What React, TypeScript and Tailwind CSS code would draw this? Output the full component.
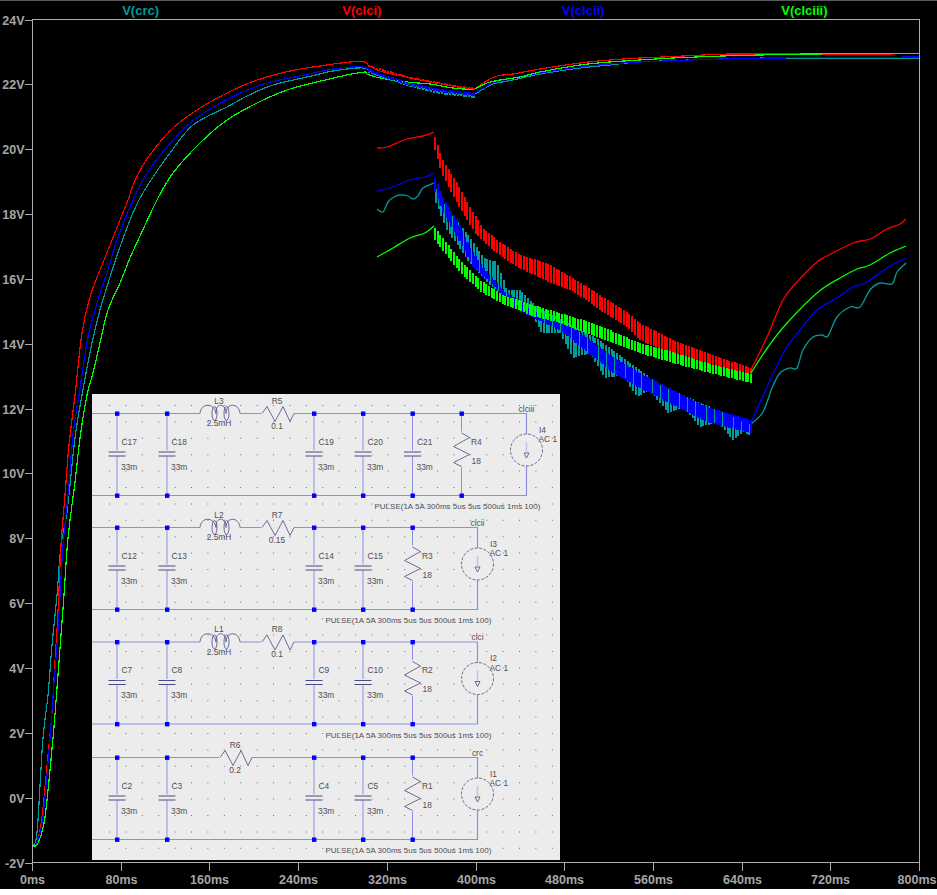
type Pt = [number, number];

const CYAN = "#009b9b";
const RED = "#ff0000";
const BLUE = "#0000ff";
const GREEN = "#00ff00";
const AXIS = "#adadad";

// all traces are in screen pixels, read off the plot
const mainTraces: { color: string; pts: Pt[] }[] = [
  {
    color: CYAN,
    pts: [[33, 846], [36, 840], [38, 820], [43, 738], [48, 695], [52, 645], [57, 595], [61, 545], [67, 512], [75, 438], [82, 395], [92, 343], [100, 310], [110, 277], [120, 247], [130, 220], [139, 200], [153, 177], [170, 153], [193, 125], [227, 107], [247, 96], [273, 85], [307, 77], [333, 71], [363, 68], [377, 75], [407, 84], [440, 91], [470, 95], [480, 91], [493, 84], [513, 80], [540, 74], [580, 68], [610, 65], [640, 62], [720, 59], [773, 58], [919, 58]],
  },
  {
    color: RED,
    pts: [[33, 846], [37, 842], [42, 817], [49, 745], [52, 712], [55, 662], [58, 612], [61, 545], [65, 495], [69, 445], [75, 395], [82, 333], [90, 297], [100, 270], [112, 240], [128, 200], [133, 185], [143, 165], [155, 148], [173, 128], [200, 108], [233, 90], [257, 80], [290, 71], [320, 66], [350, 62], [365, 62], [368, 65], [377, 70], [387, 73], [407, 77], [430, 82], [453, 86], [473, 89], [483, 83], [497, 76], [513, 74], [540, 69], [580, 63], [610, 60], [640, 58], [663, 57], [693, 55.5], [730, 54], [807, 54], [893, 54]],
  },
  {
    color: BLUE,
    pts: [[33, 846], [37, 842], [43, 817], [50, 738], [53, 695], [57, 645], [60, 595], [63, 545], [68, 495], [73, 435], [79, 395], [88, 337], [98, 300], [108, 270], [117, 240], [133, 200], [147, 173], [167, 147], [190, 123], [217, 105], [243, 92], [267, 83], [300, 76], [333, 69], [363, 67], [377, 74], [407, 83], [440, 90], [470, 94], [480, 90], [493, 83], [513, 78], [540, 73], [580, 67], [610, 64], [640, 62], [720, 59], [773, 58], [919, 57]],
  },
  {
    color: GREEN,
    pts: [[33, 846], [38, 843], [45, 817], [53, 738], [57, 688], [61, 635], [64, 595], [68, 538], [75, 482], [80, 438], [87, 395], [93, 373], [100, 343], [108, 310], [120, 283], [130, 258], [140, 236], [157, 200], [173, 173], [200, 143], [227, 120], [257, 103], [287, 90], [317, 82], [347, 75], [365, 72], [367, 74], [380, 78], [407, 82], [430, 84], [453, 88], [473, 89], [487, 83], [500, 80], [520, 77], [540, 72], [580, 65], [610, 62], [640, 60], [673, 58], [723, 56], [760, 55], [807, 54], [897, 53.5], [919, 53.5]],
  },
];

const pulseTraces: { color: string; before: Pt[]; after: Pt[]; upper: Pt[]; lower: Pt[]; phase: number; bar: number }[] = [
  {
    color: CYAN,
    before: [[377, 209], [383, 212], [388, 202], [394, 197], [400, 195], [408, 196], [413, 199], [418, 196], [423, 188], [434, 183]],
    after: [[751, 424], [763, 412], [772, 388], [780, 373], [790, 368], [797, 368], [803, 350], [813, 337], [822, 335], [828, 336], [837, 317], [850, 307], [860, 307], [870, 290], [880, 283], [892, 284], [897, 272], [906, 263]],
    upper: [[435, 187], [447, 210], [467, 233], [483, 257], [497, 262], [507, 290], [520, 290], [537, 307], [600, 340], [660, 385], [751, 425]],
    lower: [[435, 200], [447, 230], [470, 263], [490, 285], [533, 317], [542, 333], [560, 333], [573, 358], [590, 353], [605, 378], [623, 375], [637, 397], [650, 390], [668, 413], [683, 407], [700, 427], [718, 422], [733, 440], [743, 432], [751, 436]],
    phase: 1,
    bar: 2,
  },
  {
    color: RED,
    before: [[377, 148], [387, 147], [407, 139], [423, 136], [434, 132]],
    after: [[751, 370], [767, 337], [783, 300], [797, 282], [817, 262], [827, 256], [853, 243], [870, 239], [887, 229], [900, 224], [906, 219]],
    upper: [[435, 137], [443, 160], [457, 183], [470, 207], [483, 228], [500, 242], [520, 255], [547, 263], [573, 278], [600, 295], [627, 312], [640, 323], [673, 340], [707, 353], [751, 368]],
    lower: [[435, 150], [443, 176], [457, 203], [475, 233], [493, 250], [517, 267], [547, 281], [573, 291], [600, 310], [627, 327], [640, 340], [673, 355], [707, 365], [751, 378]],
    phase: 0,
    bar: 2,
  },
  {
    color: BLUE,
    before: [[377, 191], [390, 188], [410, 180], [425, 177], [434, 173]],
    after: [[751, 423], [767, 387], [785, 350], [800, 330], [817, 310], [837, 298], [853, 287], [867, 282], [887, 268], [906, 258]],
    upper: [[435, 178], [443, 197], [457, 220], [470, 248], [483, 267], [503, 290], [533, 310], [560, 320], [587, 337], [613, 357], [640, 373], [673, 390], [707, 407], [751, 420]],
    lower: [[435, 192], [443, 213], [457, 237], [473, 267], [493, 285], [513, 307], [537, 320], [560, 330], [587, 352], [613, 373], [640, 388], [673, 405], [707, 422], [751, 433]],
    phase: 0,
    bar: 2.4,
  },
  {
    color: GREEN,
    before: [[377, 257], [393, 248], [410, 238], [425, 233], [434, 226]],
    after: [[751, 373], [768, 347], [787, 323], [817, 293], [840, 278], [857, 269], [870, 265], [890, 253], [906, 246]],
    upper: [[435, 228], [447, 243], [460, 260], [480, 280], [503, 295], [533, 305], [560, 313], [593, 323], [640, 343], [673, 352], [707, 363], [751, 374]],
    lower: [[435, 240], [447, 256], [460, 272], [480, 291], [503, 304], [533, 316], [560, 323], [593, 335], [640, 353], [673, 363], [707, 372], [751, 383]],
    phase: 0,
    bar: 2,
  },
];

// ripple right after the first load step, where the main traces get noisy
const ripple: { color: string; from: Pt[]; to: Pt[] }[] = [
  { color: CYAN, from: [[368, 70], [407, 83], [440, 90], [476, 95]], to: [[368, 73], [407, 86], [440, 94], [476, 98]] },
  { color: RED, from: [[368, 65], [407, 76], [453, 85], [476, 88]], to: [[368, 67], [407, 78], [453, 87], [476, 90]] },
  { color: BLUE, from: [[368, 69], [407, 82], [440, 89], [476, 93]], to: [[368, 72], [407, 85], [440, 92], [476, 96]] },
];

function at(pts: Pt[], x: number) {
  if (x <= pts[0][0]) return pts[0][1];
  for (let i = 1; i < pts.length; i++) {
    if (x <= pts[i][0]) {
      const [x0, y0] = pts[i - 1];
      const [x1, y1] = pts[i];
      return y0 + ((y1 - y0) * (x - x0)) / (x1 - x0);
    }
  }
  return pts[pts.length - 1][1];
}

// catmull-rom through the read-off points so the curves don't look like polygons
function smooth(pts: Pt[]) {
  let d = `M${pts[0][0]} ${pts[0][1]}`;
  for (let i = 0; i < pts.length - 1; i++) {
    const p0 = pts[Math.max(i - 1, 0)];
    const p1 = pts[i];
    const p2 = pts[i + 1];
    const p3 = pts[Math.min(i + 2, pts.length - 1)];
    const c1x = p1[0] + (p2[0] - p0[0]) / 6;
    const c1y = p1[1] + (p2[1] - p0[1]) / 6;
    const c2x = p2[0] - (p3[0] - p1[0]) / 6;
    const c2y = p2[1] - (p3[1] - p1[1]) / 6;
    d += `C${c1x.toFixed(1)} ${c1y.toFixed(1)} ${c2x.toFixed(1)} ${c2y.toFixed(1)} ${p2[0]} ${p2[1]}`;
  }
  return d;
}

function bars(upper: Pt[], lower: Pt[], x0: number, x1: number, phase: number) {
  let d = "";
  for (let x = x0 + phase; x <= x1; x += 2.7) {
    d += `M${x.toFixed(1)} ${at(upper, x).toFixed(1)}V${at(lower, x).toFixed(1)}`;
  }
  return d;
}

const yLabels = ["24V", "22V", "20V", "18V", "16V", "14V", "12V", "10V", "8V", "6V", "4V", "2V", "0V", "-2V"];
const xLabels = ["0ms", "80ms", "160ms", "240ms", "320ms", "400ms", "480ms", "560ms", "640ms", "720ms", "800ms"];

function Plot() {
  return (
    <svg className="block overflow-visible" width={937} height={869} viewBox="0 20 937 869" fontFamily="'Liberation Sans', Arial, sans-serif">
      <rect x={32.5} y={19.5} width={887} height={843} fill="none" stroke={AXIS} />
      {yLabels.map((label, i) => {
        const y = Math.round(19.5 + i * 64.85) + 0.5;
        return (
          <g key={label}>
            <path d={`M25 ${y}H32`} stroke={AXIS} />
            <text x={24.5} y={y + 4.5} textAnchor="end" fontSize={12.5} fontWeight={700} fill="#a6a6a6">
              {label}
            </text>
          </g>
        );
      })}
      {xLabels.map((label, i) => {
        const x = Math.round(32 + i * 88.7) + 0.5;
        return (
          <g key={label}>
            <path d={`M${x} 863V871`} stroke={AXIS} />
            <text x={i === 10 ? 936.5 : x} y={883.5} textAnchor={i === 10 ? "end" : "middle"} fontSize={12.5} fontWeight={700} fill="#a6a6a6">
              {label}
            </text>
          </g>
        );
      })}

      {mainTraces.map((t) => (
        <path key={t.color} d={smooth(t.pts)} fill="none" stroke={t.color} strokeWidth={1.2} shapeRendering="crispEdges" />
      ))}
      {ripple.map((r) => (
        <path key={r.color} d={bars(r.from, r.to, 369, 476, 0)} fill="none" stroke={r.color} strokeWidth={2} shapeRendering="crispEdges" />
      ))}
      {pulseTraces.map((t) => (
        <g key={t.color} fill="none" stroke={t.color}>
          <path d={smooth(t.before)} strokeWidth={1.3} />
          <path d={bars(t.upper, t.lower, 435, 751, t.phase)} strokeWidth={t.bar} shapeRendering="crispEdges" />
          <path d={smooth(t.after)} strokeWidth={1.3} />
        </g>
      ))}
    </svg>
  );
}

const WIRE = "#8d8de4";
const INK = "#4a4a82";
const LABEL = "#4f4f57";

function Label({ x, y, children, anchor = "start", size = 8.4 }: { x: number; y: number; children: string; anchor?: "start" | "middle"; size?: number }) {
  return (
    <text x={x} y={y + 3.2} fontSize={size} fill={LABEL} textAnchor={anchor}>
      {children}
    </text>
  );
}

function Capacitor({ x, top, name }: { x: number; top: number; name: string }) {
  return (
    <g>
      <path d={`M${x} ${top}V${top + 82}`} stroke={WIRE} fill="none" />
      <rect x={x - 9} y={top + 37} width={18} height={6} fill="#ececec" />
      <path d={`M${x - 8.5} ${top + 38.5}H${x + 8.5}M${x - 8.5} ${top + 42.5}H${x + 8.5}`} stroke={INK} fill="none" />
      <Label x={x + 4.5} y={top + 28}>{name}</Label>
      <Label x={x + 4} y={top + 53}>33m</Label>
    </g>
  );
}

function Node({ x, y }: { x: number; y: number }) {
  return <rect x={x - 2} y={y - 2} width={4.4} height={4.4} fill="#0000ff" />;
}

function Inductor({ top, name }: { top: number; name: string }) {
  const y = top;
  return (
    <g fill="none">
      <rect x={200} y={y - 2} width={40} height={4} fill="#ececec" />
      <path d={`M200 ${y}C201 ${y - 11} 214 ${y - 11} 216 ${y}C215 ${y - 11} 226 ${y - 11} 226 ${y}C226 ${y - 11} 239 ${y - 11} 240 ${y}`} stroke={INK} strokeWidth={0.8} />
      <ellipse cx={214.5} cy={y} rx={2.5} ry={7} stroke={INK} strokeWidth={0.8} />
      <ellipse cx={226.5} cy={y} rx={2.5} ry={7} stroke={INK} strokeWidth={0.8} />
      <Label x={219} y={y - 13} anchor="middle">{name}</Label>
      <Label x={219} y={y + 9.5} anchor="middle">2.5mH</Label>
    </g>
  );
}

function Resistor({ x, top, name, value }: { x: number; top: number; name: string; value: string }) {
  return (
    <g fill="none">
      <rect x={x - 1} y={top - 2} width={33} height={4} fill="#ececec" />
      <path d={`M${x} ${top}l5 -7l8 15l8 -15l7 15l4 -8`} stroke={INK} strokeWidth={0.8} />
      <Label x={x + 15} y={top - 13} anchor="middle">{name}</Label>
      <Label x={x + 15} y={top + 12} anchor="middle">{value}</Label>
    </g>
  );
}

function Load({ x, top, name, value }: { x: number; top: number; name: string; value: string }) {
  return (
    <g fill="none">
      <path d={`M${x} ${top}V${top + 82}`} stroke={WIRE} />
      <rect x={x - 2} y={top + 18} width={4} height={36} fill="#ececec" />
      <path d={`M${x} ${top + 19.5}l8 4.5l-16 9l16 8l-16 8l8 4`} stroke={INK} strokeWidth={0.8} />
      <Label x={x + 9.5} y={top + 28}>{name}</Label>
      <Label x={x + 10} y={top + 47}>{value}</Label>
    </g>
  );
}

function Source({ x, top, name, net }: { x: number; top: number; name: string; net: string }) {
  const cy = top + 36.5;
  return (
    <g fill="none">
      <circle cx={x} cy={cy} r={16} fill="#ececec" stroke={INK} strokeWidth={0.8} strokeDasharray="3 1.5" />
      <path d={`M${x} ${cy - 8}V${cy + 2}`} stroke="#c4c4e6" strokeWidth={1.5} />
      <path d={`M${x - 2.5} ${cy + 3}h5l-2.5 5z`} stroke={INK} strokeWidth={0.8} />
      <Label x={x} y={top - 5} anchor="middle">{net}</Label>
      <Label x={x + 12.5} y={top + 16}>{name}</Label>
      <Label x={x + 12} y={top + 25.5}>AC 1</Label>
    </g>
  );
}

const rows = [
  { top: 413.5, caps: ["C17", "C18", "C19", "C20", "C21"], l: "L3", r: ["R5", "0.1"], load: "R4", src: "I4", net: "clciii" },
  { top: 527.5, caps: ["C12", "C13", "C14", "C15"], l: "L2", r: ["R7", "0.15"], load: "R3", src: "I3", net: "clcii" },
  { top: 642, caps: ["C7", "C8", "C9", "C10"], l: "L1", r: ["R8", "0.1"], load: "R2", src: "I2", net: "clci" },
  { top: 757.5, caps: ["C2", "C3", "C4", "C5"], l: "", r: ["R6", "0.2"], load: "R1", src: "I1", net: "crc" },
];

const capX = [117, 167, 314, 363, 412.5, 461.5];

function Row({ top, caps, l, r, load, src, net }: (typeof rows)[number]) {
  const loadX = capX[caps.length];
  const srcX = loadX + 65;
  const bottom = top + 82;
  return (
    <g>
      <path d={`M92 ${top}H${srcX}V${top + 82}H92`} stroke={WIRE} strokeWidth={1.2} fill="none" />
      {caps.map((name, i) => (
        <Capacitor key={name} x={capX[i]} top={top} name={name} />
      ))}
      {l ? <Inductor top={top} name={l} /> : null}
      <Resistor x={l ? 262 : 220} top={top} name={r[0]} value={r[1]} />
      <Load x={loadX} top={top} name={load} value="18" />
      <Source x={srcX} top={top} name={src} net={net} />
      {capX.slice(0, caps.length + 1).map((x) => (
        <g key={x}>
          <Node x={x} y={top} />
          <Node x={x} y={bottom} />
        </g>
      ))}
      <Label x={srcX - 152} y={bottom + 10.5} size={8}>PULSE(1A 5A 300ms 5us 5us 500us 1ms 100)</Label>
    </g>
  );
}

function Schematic() {
  const dots: Pt[] = [];
  for (let y = 405; y < 860; y += 16.4) {
    for (let x = 109; x < 558; x += 16.4) dots.push([x, y]);
  }
  return (
    <svg className="block" width={468} height={466} viewBox="92 394 468 466" fontFamily="'Liberation Sans', Arial, sans-serif">
      <path d={dots.map(([x, y]) => `M${x.toFixed(1)} ${y.toFixed(1)}h1v1h-1z`).join("")} fill="#6e6e6e" />
      {rows.map((row) => (
        <Row key={row.net} {...row} />
      ))}
    </svg>
  );
}

export default function App() {
  return (
    <div className="h-[889px] w-[937px] overflow-hidden border-t border-[#5a5a5a] bg-black font-['Liberation_Sans',Arial,sans-serif]">
      <div className="ml-[30px] grid h-[19px] w-[885px] grid-cols-4 text-center text-[13px] font-bold leading-[19px]">
        <span className="text-[#009b9b]">V(crc)</span>
        <span className="text-[#ff0000]">V(clci)</span>
        <span className="text-[#0000ff]">V(clcii)</span>
        <span className="text-[#00ff00]">V(clciii)</span>
      </div>
      <div className="relative">
        <Plot />
        <div className="absolute left-[92px] top-[374px] bg-[#ececec]">
          <Schematic />
        </div>
      </div>
    </div>
  );
}
